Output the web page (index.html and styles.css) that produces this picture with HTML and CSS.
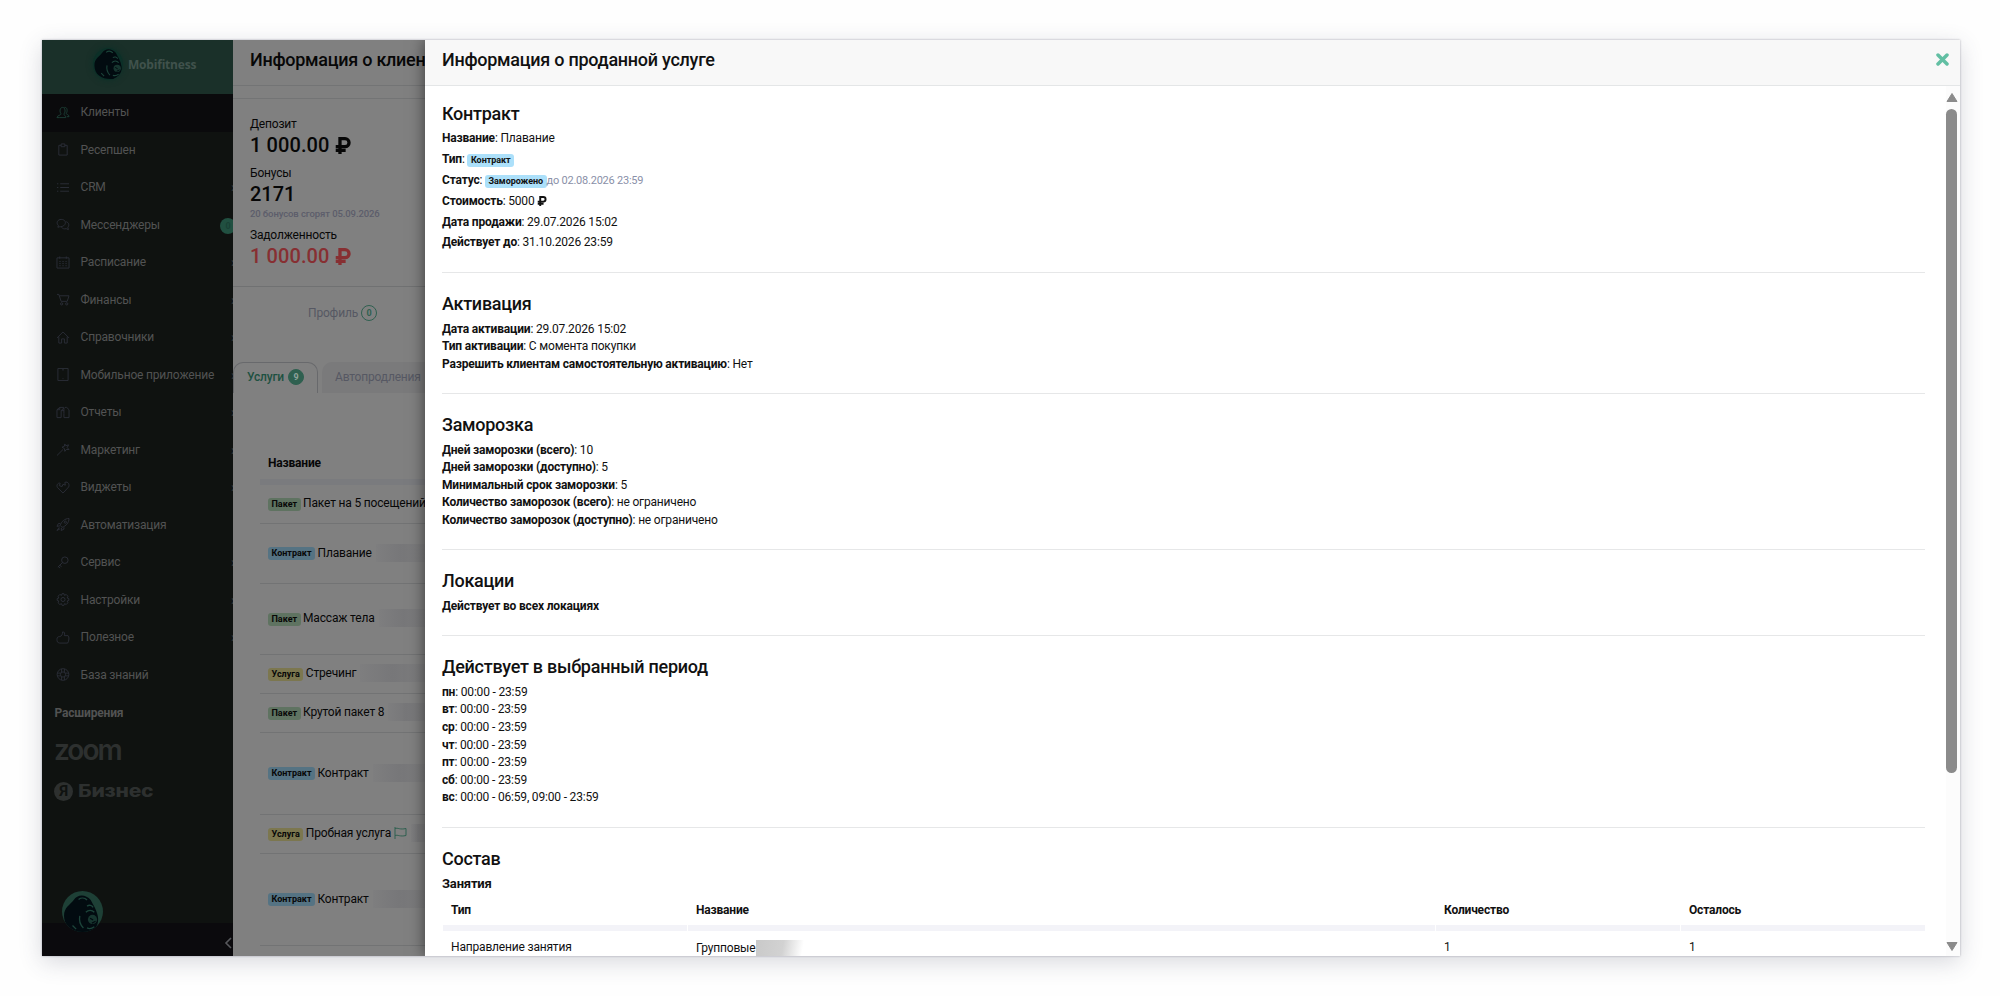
FILE: index.html
```html
<!DOCTYPE html>
<html lang="ru">

<head>
    <meta charset="UTF-8">
    <meta name="viewport" content="width=device-width, initial-scale=1.0">
    <title>Mobifitness</title>
    <link rel="stylesheet" href="styles.css">
</head>

<body>
    <svg class="defs" width="0" height="0">
        <symbol id="gorilla" viewBox="0 0 30 33">
            <path d="M1 18 C1 11 6 9 9 5 C12 0 19 0 23 5 C25 9 28 13 29 19 C30 27 25 32 18 32 C8 32 1 27 1 18 Z" fill="#020b10"/>
            <circle cx="24.500" cy="21" r="3.800" fill="#17362f"/>
            <path d="M22.500 20 L25 21.500 M24 24 L27 22.500" stroke="#020b10" stroke-width="1"/>
            <path d="M20 10 C22 8.500 24 9.500 25 11 M19 15 C21 13 24 13 26 15 M20 28 C22 29 24 28.500 26 27 M13 4.500 C15 3 18 3 20 5 M14 18 C13 23 15 26 17 28 M8 26 L11 29" fill="none" stroke="#1c443a" stroke-width="1.1"/>
        </symbol>
        <symbol id="rub" viewBox="0 0 16 18">
            <path d="M4.8 18 V1.8 H10.2 A4.2 4.2 0 0 1 10.2 10.2 H.3 M.3 14.2 H10.800" fill="none" stroke="currentColor" stroke-width="3.500"/>
        </symbol>
    </svg>

    <div class="window">
        <aside class="sidebar">
            <div class="logo">
                <svg class="logo-img"><use href="#gorilla"/></svg>
                <span>Mobifitness</span>
            </div>
            <nav class="menu">
                <a class="item active"><svg viewBox="0 0 14 14"><path d="M3.500 12.500 H10 C10 10.500 8 10 8 8.500 C10 6.500 9.500 1.500 6.500 1.500 C3.500 1.500 3 6.500 5 8.500 C5 10 .5 10 .5 12.500 H3.500 M8.500 1.500 C12 1 12 6 10.500 8 C10.500 9.500 13.500 9 13.500 11.500 H11"/></svg><span>Клиенты</span></a>
                <a class="item"><svg viewBox="0 0 14 14"><path d="M5 2.500 H2.500 V13 H11.500 V2.500 H9 M5 1 H9 V4 H5 Z"/></svg><span>Ресепшен</span></a>
                <a class="item more"><svg viewBox="0 0 14 14"><path d="M4 3 H13.500 M4 7 H13.500 M4 11 H13.500 M.5 3 H2 M.5 7 H2 M.5 11 H2"/></svg><span>CRM</span></a>
                <a class="item"><svg viewBox="0 0 14 14"><path d="M3 9.500 L1.500 10 L2 8 C-1 5 1.500 1.500 5 1.500 C9 1.500 10.500 4.500 9 7 C7.500 9.200 5 9.500 3 9.500 M10.500 4 C13.500 5 14 8 12.200 10 L12.800 12.500 L10.500 11.500 C8 12 6.500 11.500 5.500 10"/></svg><span>Мессенджеры</span><b class="dot">0</b></a>
                <a class="item more"><svg viewBox="0 0 14 14"><path d="M.5 2 H13.500 V13 H.5 Z M3.500 .5 V3 M10.500 .5 V3 M3 6 H4.500 M6.300 6 H7.800 M9.600 6 H11 M3 8.200 H4.500 M6.300 8.200 H7.800 M9.600 8.200 H11 M3 10.500 H4.500 M6.300 10.500 H7.800 M9.600 10.500 H11"/></svg><span>Расписание</span></a>
                <a class="item more"><svg viewBox="0 0 14 14"><path d="M.5 1.500 H2.500 L5 9 H11.500 L13.500 3 H3.200"/><circle cx="5.500" cy="11.700" r="1.200"/><circle cx="11" cy="11.700" r="1.200"/></svg><span>Финансы</span></a>
                <a class="item more"><svg viewBox="0 0 14 14"><path d="M.5 7.500 L7 1 L13.500 7.500 M2.500 6 V13 H5.500 V8.500 H8.500 V13 H11.500 V6"/></svg><span>Справочники</span></a>
                <a class="item more"><svg viewBox="0 0 14 14"><path d="M1.500 .5 H12.500 V13.500 H1.500 Z M6 2 H8 M6.500 11.500 H7.500"/></svg><span>Мобильное приложение</span></a>
                <a class="item more"><svg viewBox="0 0 14 14"><path d="M5 12.500 H.5 V4 L3.500 1.500 H8 M3.500 1.500 V4 H.5 M5 12.500 V5 L8 2 L8 8 M9 1.500 H11 L13.500 4 V12.500 H8 V8 M5 5 H8"/></svg><span>Отчеты</span></a>
                <a class="item more"><svg viewBox="0 0 14 14"><path d="M.5 13.500 L7 7 M9 1 L10 3 L13 2 L11.500 5 L13.500 7 L10.500 7 L9 9 L8.500 6 L6 4.500 L8.500 3.500 Z"/></svg><span>Маркетинг</span></a>
                <a class="item more"><svg viewBox="0 0 14 14"><path d="M7 13 L1 7 C-.5 4 2 1.500 4 2.500 L3 5 L6 6 L7 3.500 L9.500 4.500 L9 1.500 C12.500 0 14.500 4 13 6.500 Z"/></svg><span>Виджеты</span></a>
                <a class="item"><svg viewBox="0 0 14 14"><path d="M4 8 C5 4 9 .5 13.500 .5 C13.500 5 10 9 6 10 Z M4 6 H2 L.5 9 L3.500 8.500 M8 10 V12 L5 13.500 L5.500 10.500 M3 10 L.5 13.500 L4 11.500"/><circle cx="9.500" cy="4.500" r="1.200"/></svg><span>Автоматизация</span></a>
                <a class="item more"><svg viewBox="0 0 14 14"><circle cx="9" cy="4.500" r="3.500"/><path d="M6.500 7 L1.500 12 M2 11.500 L4 13 M3.500 10 L5.500 11.500"/></svg><span>Сервис</span></a>
                <a class="item more"><svg viewBox="0 0 14 14"><path d="M6 .7 H8 L8.500 2.500 L10.500 1.600 L12.300 3.500 L11.500 5.400 L13.300 6 V8 L11.500 8.600 L12.300 10.500 L10.500 12.300 L8.600 11.500 L8 13.300 H6 L5.400 11.500 L3.500 12.300 L1.700 10.500 L2.500 8.600 L.7 8 V6 L2.500 5.400 L1.700 3.500 L3.500 1.600 L5.500 2.500 Z"/><circle cx="7" cy="7" r="2.200"/></svg><span>Настройки</span></a>
                <a class="item more"><svg viewBox="0 0 14 14"><path d="M3.500 6 C6 5.500 6.500 3 6.500 1 C9 .5 9 3 8.500 5 H12.500 C14 6 13.500 11 12 13 H3.500 C1 13 .5 11 .5 9 C.5 7 1.500 6 3.500 6"/></svg><span>Полезное</span></a>
                <a class="item"><svg viewBox="0 0 14 14"><circle cx="7" cy="7" r="6.300"/><circle cx="7" cy="7" r="2.800"/><path d="M5.500 1 V4.500 M8.500 1 V4.500 M5.500 9.500 V13 M8.500 9.500 V13 M1 5.500 H4.500 M1 8.500 H4.500 M9.500 5.500 H13 M9.500 8.500 H13"/></svg><span>База знаний</span></a>
            </nav>
            <div class="ext-title">Расширения</div>
            <div class="ext zoom">zoom</div>
            <div class="ext yandex"><i>Я</i><span>Бизнес</span></div>
            <div class="sidebar-footer">
                <div class="avatar"><svg><use href="#gorilla"/></svg></div>
                <svg class="collapse" viewBox="0 0 8 12"><path d="M7 1 L2 6 L7 11"/></svg>
            </div>
        </aside>

        <section class="client">
            <h1 class="client-title">Информация о клиенте</h1>
            <div class="strip"></div>
            <div class="balance">
                <div class="label">Депозит</div>
                <div class="sum">1 000.00 <svg><use href="#rub"/></svg></div>
                <div class="label">Бонусы</div>
                <div class="sum bonus">2171</div>
                <div class="hint">20 бонусов сгорят 05.09.2026</div>
                <div class="label">Задолженность</div>
                <div class="sum debt">1 000.00 <svg><use href="#rub"/></svg></div>
            </div>
            <div class="profile">Профиль <b>0</b></div>
            <div class="tabs">
                <div class="tab current">Услуги <b>9</b></div>
                <div class="tab">Автопродления <b></b></div>
            </div>
            <div class="services">
                <div class="services-head">Название</div>
                <div class="service h39"><b class="badge green">Пакет</b>Пакет на 5 посещений</div>
                <div class="service h60"><b class="badge blue">Контракт</b>Плавание<i class="blur"></i></div>
                <div class="service h71"><b class="badge green">Пакет</b>Массаж тела<i class="blur"></i></div>
                <div class="service h39"><b class="badge yellow">Услуга</b>Стречинг<i class="blur"></i></div>
                <div class="service h39"><b class="badge green">Пакет</b>Крутой пакет 8<i class="blur"></i></div>
                <div class="service h82"><b class="badge blue">Контракт</b>Контракт<i class="blur"></i></div>
                <div class="service h39"><b class="badge yellow">Услуга</b>Пробная услуга<svg class="flag" viewBox="0 0 13 12"><path d="M1 0 V12 M1 1.500 C4 .5 6 3 12 1.500 V8.500 C6 10 4 7.500 1 8.500"/></svg><i class="blur"></i></div>
                <div class="service h92"><b class="badge blue">Контракт</b>Контракт<i class="blur"></i></div>
            </div>
        </section>

        <main class="drawer">
            <header class="drawer-head">
                <h1>Информация о проданной услуге</h1>
                <svg class="close" viewBox="0 0 13 13"><path d="M2 2 L11 11 M11 2 L2 11"/></svg>
            </header>
            <div class="drawer-body">
                <div class="content">
                    <section class="contract">
                        <h2>Контракт</h2>
                        <p><b>Название</b>: Плавание</p>
                        <p><b>Тип</b>: <b class="badge light">Контракт</b></p>
                        <p><b>Статус</b>: <b class="badge light">Заморожено</b><span class="until">до 02.08.2026 23:59</span></p>
                        <p><b>Стоимость</b>: 5000 <svg class="rub"><use href="#rub"/></svg></p>
                        <p><b>Дата продажи</b>: 29.07.2026 15:02</p>
                        <p><b>Действует до</b>: 31.10.2026 23:59</p>
                    </section>
                    <section>
                        <h2>Активация</h2>
                        <p><b>Дата активации</b>: 29.07.2026 15:02</p>
                        <p><b>Тип активации</b>: С момента покупки</p>
                        <p><b>Разрешить клиентам самостоятельную активацию</b>: Нет</p>
                    </section>
                    <section>
                        <h2>Заморозка</h2>
                        <p><b>Дней заморозки (всего)</b>: 10</p>
                        <p><b>Дней заморозки (доступно)</b>: 5</p>
                        <p><b>Минимальный срок заморозки</b>: 5</p>
                        <p><b>Количество заморозок (всего)</b>: не ограничено</p>
                        <p><b>Количество заморозок (доступно)</b>: не ограничено</p>
                    </section>
                    <section>
                        <h2>Локации</h2>
                        <p><b>Действует во всех локациях</b></p>
                    </section>
                    <section>
                        <h2>Действует в выбранный период</h2>
                        <p><b>пн</b>: 00:00 - 23:59</p>
                        <p><b>вт</b>: 00:00 - 23:59</p>
                        <p><b>ср</b>: 00:00 - 23:59</p>
                        <p><b>чт</b>: 00:00 - 23:59</p>
                        <p><b>пт</b>: 00:00 - 23:59</p>
                        <p><b>сб</b>: 00:00 - 23:59</p>
                        <p><b>вс</b>: 00:00 - 06:59, 09:00 - 23:59</p>
                    </section>
                    <section class="last">
                        <h2>Состав</h2>
                        <h3>Занятия</h3>
                        <div class="grid head">
                            <div>Тип</div>
                            <div>Название</div>
                            <div>Количество</div>
                            <div>Осталось</div>
                        </div>
                        <div class="grid">
                            <div>Направление занятия</div>
                            <div>Групповые<i class="smudge"></i></div>
                            <div>1</div>
                            <div>1</div>
                        </div>
                    </section>
                </div>
                <div class="scrollbar">
                    <svg viewBox="0 0 12 10"><path d="M6 1 L11 9 H1 Z"/></svg>
                    <div class="thumb"></div>
                    <svg class="down" viewBox="0 0 12 10"><path d="M6 9 L11 1 H1 Z"/></svg>
                </div>
            </div>
        </main>
    </div>
</body>

</html>
```
FILE: styles.css
```css
* {
    box-sizing: border-box;
}

body {
    margin: 0;
    height: 996px;
    overflow: hidden;
    padding: 40px 40px 40px 42px;
    background-color: #fefefe;
    font-family: Roboto, sans-serif;
    font-size: 12px;
    letter-spacing: -.18px;
    color: #111;
}

h1, h2, h3, p {
    margin: 0;
}

h1, h2 {
    font-size: 18px;
    font-weight: 500;
    letter-spacing: -.27px;
}

.defs {
    display: block;
}

.window {
    display: flex;
    width: 1918px;
    height: 916px;
    overflow: hidden;
    box-shadow: 0 0 2px rgba(60, 60, 80, .4), 0 6px 22px rgba(60, 65, 90, .2);
}

/* menu */
.sidebar {
    flex: none;
    display: flex;
    flex-direction: column;
    width: 191px;
    overflow: hidden;
    background-color: #0f1210;
    color: #525353;
}

.logo {
    display: flex;
    align-items: center;
    height: 54px;
    padding: 0 0 6px 51px;
    background-color: #1a3029;
    color: #40524c;
    font: bold 12px "Open Sans", sans-serif;
    letter-spacing: -.2px;
}

.logo-img {
    width: 30px;
    height: 32px;
    margin-right: 5px;
    border-radius: 50%;
    background-color: #0c3028;
    box-shadow: 0 0 6px #0c3028;
}

.menu {
    height: 599px;
}

.item {
    display: flex;
    align-items: center;
    height: 37.5px;
    padding: 0 0 1px 14px;
    white-space: nowrap;
}

.item.active {
    background-color: #0a0a0c;
}

.item svg {
    flex: none;
    width: 14px;
    height: 13px;
    margin-right: 10.5px;
    fill: none;
    stroke: #2b2e38;
    stroke-width: 1;
}

.item.active svg {
    stroke: #1c4036;
}

.item.more::after {
    content: "›";
    flex: none;
    margin-left: auto;
    margin-right: -2px;
    color: #3c3e40;
    font-size: 14px;
}

.dot {
    flex: none;
    width: 16px;
    height: 16px;
    margin: 3px -3px 0 auto;
    border-radius: 50%;
    background-color: #215041;
    color: #1a4236;
    font-size: 9px;
    line-height: 16px;
    text-align: center;
}

.ext-title {
    padding: 13px 0 0 12.5px;
    height: 43px;
    font-weight: 700;
}

.ext {
    color: #2d302f;
    padding-left: 12px;
}

.zoom {
    height: 45px;
    font: 600 28px/28px Inter, sans-serif;
    letter-spacing: -2px;
}

.yandex {
    display: flex;
    align-items: center;
    height: 20px;
    font: 800 17px/20px Inter, sans-serif;
}

.yandex i {
    width: 19px;
    height: 19px;
    margin-right: 5px;
    border-radius: 50%;
    background-color: #2d302f;
    color: #0f1210;
    font: 700 15px/19px Roboto, sans-serif;
    text-align: center;
}

.yandex span {
    transform: scaleX(1.24);
    transform-origin: left;
}

.sidebar-footer {
    position: relative;
    height: 33px;
    margin-top: auto;
    background-color: #0b0a0d;
}

.avatar {
    position: absolute;
    left: 20px;
    top: -32px;
    width: 41px;
    height: 41px;
    border-radius: 50%;
    overflow: hidden;
    background-color: #1e4036;
}

.avatar svg {
    width: 38px;
    height: 40px;
    margin-top: 3px;
}

.collapse {
    position: absolute;
    right: 1px;
    top: 14px;
    width: 8px;
    height: 12px;
    fill: none;
    stroke: #57585c;
    stroke-width: 1.6;
}

/* client card */
.client {
    flex: none;
    width: 192px;
    overflow: hidden;
    background-color: #808080;
    color: #070707;
    white-space: nowrap;
}

.client-title {
    height: 46px;
    padding: 8px 0 0 17px;
    border-bottom: 1px solid #737475;
    line-height: 24px;
}

.strip {
    height: 13px;
    border-bottom: 1px solid #737475;
}

.balance {
    height: 188px;
    padding: 18px 0 0 17px;
    border-bottom: 1px solid #707172;
}

.label {
    height: 14px;
    line-height: 14px;
}

.sum {
    height: 35px;
    font-size: 20px;
    font-weight: 500;
    letter-spacing: .1px;
    line-height: 29px;
}

.sum svg {
    width: 16px;
    height: 17px;
    vertical-align: -2px;
}

.bonus {
    height: 27px;
    letter-spacing: 0;
}

.hint {
    height: 21px;
    color: #5c5d6b;
    font-size: 9.5px;
    font-weight: 500;
    line-height: 14px;
    letter-spacing: -.1px;
}

.debt {
    color: #872f32;
}

.profile {
    display: flex;
    align-items: center;
    gap: 3px;
    height: 75px;
    padding: 0 0 23px 75px;
    color: #565863;
}

.profile b, .tab b {
    flex: none;
    width: 16px;
    height: 16px;
    border: 1px solid #2f6050;
    border-radius: 50%;
    color: #2f6050;
    font-size: 9px;
    line-height: 14px;
    text-align: center;
}

.tabs {
    display: flex;
    gap: 4px;
    height: 31px;
}

.tab {
    display: flex;
    align-items: center;
    gap: 4px;
    flex: none;
    height: 31px;
    padding: 0 13px 2px 13px;
    border-radius: 10px 10px 0 0;
    background-color: #7a7a7b;
    color: #565863;
}

.current {
    width: 85px;
    border: 1px solid #68696c;
    border-bottom: none;
    background-color: #808080;
    color: #1d5141;
    font-weight: 500;
}

.tab b {
    background-color: #2f6050;
    color: #8fa39c;
}

.services {
    padding-left: 27px;
}

.services-head {
    height: 92px;
    padding: 63px 0 0 8px;
    border-bottom: 6px solid #7a7b7e;
    font-weight: 700;
    line-height: 14px;
}

.service {
    display: flex;
    align-items: center;
    padding: 0 0 2px 8px;
    border-bottom: 1px solid #727374;
}

.h39 { height: 39px; }
.h60 { height: 60px; }
.h71 { height: 71px; }
.h82 { height: 82px; }
.h92 { height: 92px; }

.badge {
    display: inline-block;
    height: 13px;
    padding: 0 3.5px;
    border-radius: 3px;
    font-size: 9px;
    font-weight: 700;
    line-height: 13px;
    letter-spacing: 0;
}

.service .badge {
    flex: none;
    margin: 2px 2.5px 0 0;
}

.green { background-color: #5f7361; }
.blue { background-color: #557383; }
.yellow { background-color: #7c774f; }
.light {
    background-color: #ace0fa;
    letter-spacing: -.05px;
}

.blur {
    flex: 1;
    height: 18px;
    margin-left: 4px;
    background: linear-gradient(90deg, #7e7e7f, #777779 50%, #7d7d7e);
}

.flag {
    flex: none;
    width: 13px;
    height: 12px;
    margin-left: 3px;
    fill: none;
    stroke: #2f6050;
}

/* sold service */
.drawer {
    position: relative;
    flex: 1;
    display: flex;
    flex-direction: column;
    background-color: #fff;
    box-shadow: 0 0 15px rgba(0, 0, 0, .55);
}

.drawer-head {
    flex: none;
    display: flex;
    justify-content: space-between;
    height: 46px;
    padding: 8px 11px 0 17px;
    border-bottom: 1px solid #e4e6e7;
    background-color: #f8f8f8;
}

.drawer-head h1 {
    line-height: 24px;
}

.close {
    width: 13px;
    height: 13px;
    margin-top: 5px;
    stroke: #62bfa3;
    stroke-width: 3.5;
    stroke-linecap: round;
}

.drawer-body {
    flex: 1;
    display: flex;
    min-height: 0;
}

.content {
    flex: 1;
    overflow: hidden;
    padding: 0 21px 0 17px;
}

.content section {
    padding: 19.9px 0 19.8px;
    border-bottom: 1px solid #e6e7e8;
}

.content .contract {
    padding: 17px 0 18.9px;
}

.content .last {
    border-bottom: none;
}

h2 {
    margin-bottom: 5.6px;
    line-height: 22px;
}

.contract h2 {
    margin-bottom: 3.4px;
}

.content p {
    height: 17.6px;
    line-height: 17.6px;
}

.content .contract p {
    height: 20.8px;
    line-height: 20.8px;
}

.until {
    color: #8a90a8;
    font-size: 11px;
    letter-spacing: -.23px;
}

.rub {
    width: 10px;
    height: 10px;
    vertical-align: -1px;
}

h3 {
    font-size: 13px;
    line-height: 18px;
}

.grid {
    display: grid;
    grid-template-columns: 245px 748px 245px 245px;
    line-height: 14px;
}

.grid div {
    padding: 9px;
}

.grid.head div {
    height: 38px;
    padding: 10px 8px 0;
    margin: 0 0 0 1px;
    border-bottom: 6px solid #f3f3f8;
    font-weight: 700;
}

.smudge {
    display: inline-block;
    width: 48px;
    height: 16px;
    margin-left: 1px;
    vertical-align: -4px;
    background: linear-gradient(100deg, #c9c9c9, #d2d2d2 55%, #fff 95%);
}

.scrollbar {
    display: flex;
    flex-direction: column;
    align-items: center;
    width: 14px;
    padding: 6px 0 4px;
    background-color: #fcfcfc;
}

.scrollbar svg {
    width: 12px;
    height: 11px;
    margin-right: 3px;
    fill: #8b8b8b;
    stroke: #8b8b8b;
    stroke-linejoin: round;
}

.thumb {
    width: 11px;
    height: 664px;
    margin: 6px 3px 0 0;
    border-radius: 6px;
    background-color: #8b8b8b;
}

.scrollbar .down {
    margin-top: auto;
}
```
